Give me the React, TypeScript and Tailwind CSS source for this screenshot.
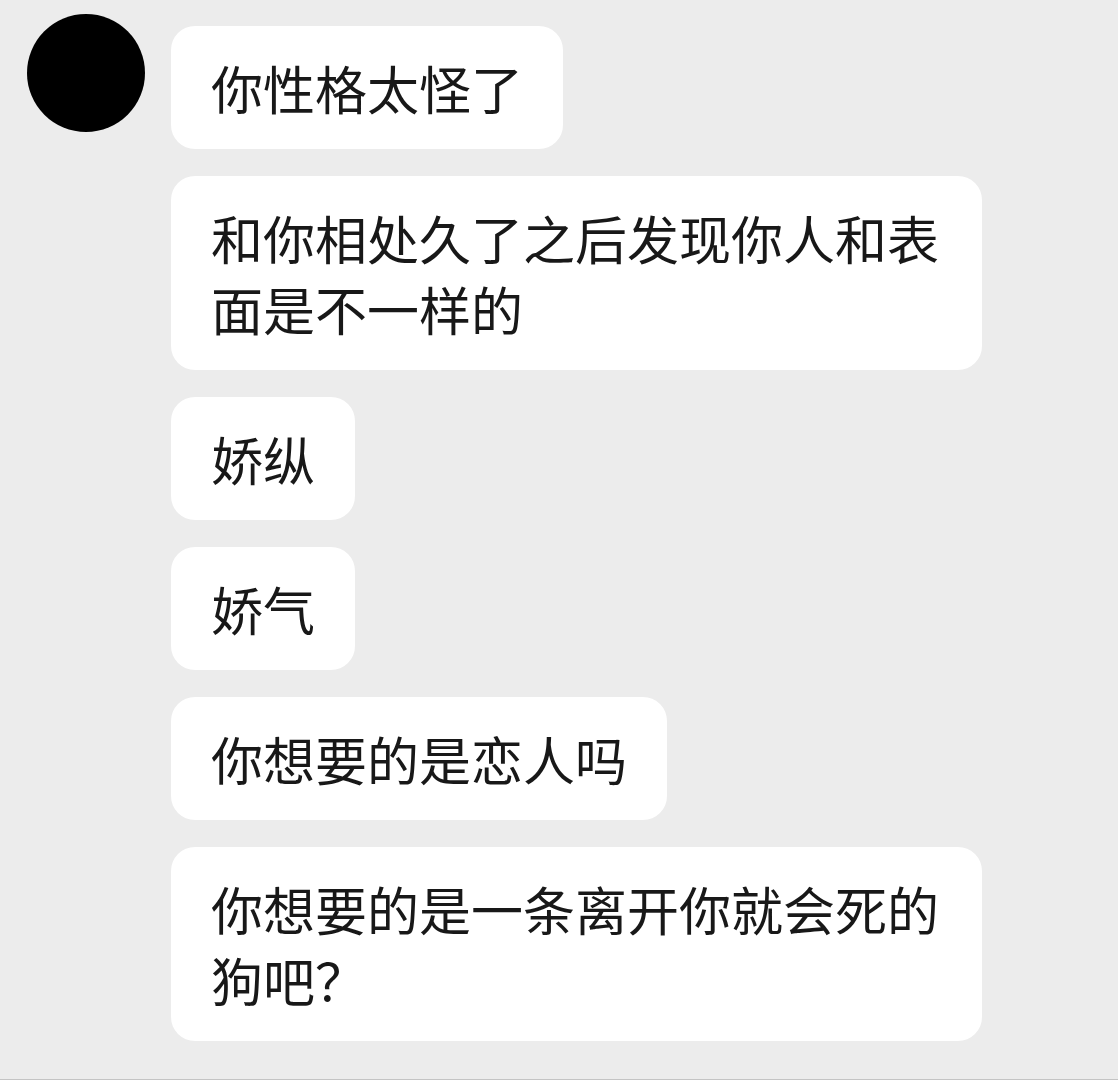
const messages = [
  "你性格太怪了",
  "和你相处久了之后发现你人和表面是不一样的",
  "娇纵",
  "娇气",
  "你想要的是恋人吗",
  "你想要的是一条离开你就会死的狗吧？",
];

export default function App() {
  return (
    <main
      lang="zh-CN"
      className="flex min-h-screen items-start gap-[26px] border-b border-[#c4c4c4] bg-[#ececec] pt-[14px] pr-6 pb-9 pl-[27px] font-['Noto_Sans_CJK_SC',sans-serif] text-[#181818]"
    >
      <div className="size-[118px] shrink-0 rounded-full bg-black" />
      <ul className="flex min-w-0 flex-col items-start gap-[27px] pt-3">
        {messages.map((text) => (
          <li
            key={text}
            className="max-w-[811px] rounded-3xl bg-white px-10 py-[26px] text-[52px] leading-[71px] break-words"
          >
            {text}
          </li>
        ))}
      </ul>
    </main>
  );
}
